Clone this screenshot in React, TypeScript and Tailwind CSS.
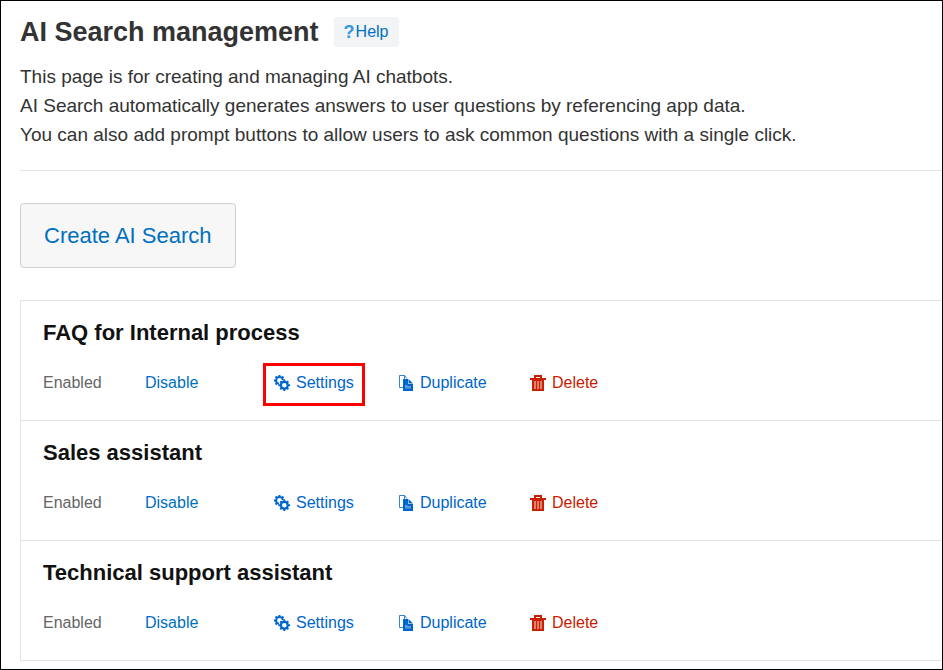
import React from "react";

const assistants = [
  { name: "FAQ for Internal process", highlighted: true },
  { name: "Sales assistant", highlighted: false },
  { name: "Technical support assistant", highlighted: false },
];

const teeth = [0, 45, 90, 135, 180, 225, 270, 315];

function Gear({ cx, cy, r, hole }: { cx: number; cy: number; r: number; hole: number }) {
  return (
    <g>
      <circle cx={cx} cy={cy} r={(r + hole) / 2} fill="none" stroke="currentColor" strokeWidth={r - hole} />
      {teeth.map((angle) => (
        <rect
          key={angle}
          x={cx - 1}
          y={cy - r - 1.2}
          width="2"
          height="2"
          fill="currentColor"
          transform={`rotate(${angle} ${cx} ${cy})`}
        />
      ))}
    </g>
  );
}

function GearsIcon() {
  return (
    <svg viewBox="0 0 16 16" className="size-4 shrink-0" aria-hidden="true">
      <Gear cx={5.5} cy={5.5} r={4.4} hole={2.4} />
      <circle cx="10.3" cy="10.3" r="5.6" fill="white" />
      <Gear cx={10.3} cy={10.3} r={4.5} hole={2.3} />
    </svg>
  );
}

function DuplicateIcon() {
  return (
    <svg viewBox="0 0 16 16" className="size-4 shrink-0" aria-hidden="true">
      <path d="M5 12.5H1.5V.5H6.5L9 3.5" fill="none" stroke="currentColor" strokeOpacity=".8" />
      <path d="M6.5.5V4" fill="none" stroke="currentColor" strokeOpacity=".8" />
      <path d="M5 4H10V9H15V16H5Z" fill="currentColor" />
      <path d="M10.5 4L15 8.5H10.5Z" fill="currentColor" />
      <path d="M7 10H9L10 11H13V13.5H7Z" fill="white" fillOpacity=".35" />
    </svg>
  );
}

function TrashIcon() {
  return (
    <svg viewBox="0 0 16 16" className="size-4 shrink-0" aria-hidden="true">
      <path d="M5 3V1H11V3" fill="none" stroke="currentColor" strokeWidth="2" />
      <path d="M0 3H16V5H0Z" fill="currentColor" />
      <path d="M2 5H14V16H2Z" fill="currentColor" />
      <path d="M5 6V14M8 6V14M11 6V14" stroke="white" strokeOpacity=".55" strokeWidth="1.6" />
    </svg>
  );
}

function AssistantRow({ name, highlighted }: { name: string; highlighted: boolean }) {
  return (
    <li className="border-b border-[#e3e3e3] px-[22px] pt-4 pb-[25px]">
      <h2 className="text-[22px] leading-8 font-bold text-[#111]">{name}</h2>
      <div className="mt-[22px] grid grid-cols-[102px_129px_124px_132px_auto] justify-start text-base leading-6">
        <span className="text-[#666]">Enabled</span>
        <button className="justify-self-start text-[#0070c0]">Disable</button>
        <button className="relative flex items-center gap-1.5 justify-self-start text-[#0066cc]">
          <GearsIcon />
          Settings
          {highlighted && (
            <span className="pointer-events-none absolute -inset-x-[11px] -top-2 -bottom-[11px] border-[3px] border-[#f00]" />
          )}
        </button>
        <button className="flex items-center gap-1.5 justify-self-start text-[#0066cc]">
          <DuplicateIcon />
          Duplicate
        </button>
        <button className="flex items-center gap-1.5 justify-self-start text-[#c82000]">
          <TrashIcon />
          Delete
        </button>
      </div>
    </li>
  );
}

export default function App() {
  return (
    <main className="min-h-screen border border-black bg-white pt-4 pb-2 pl-[19px] font-['Liberation_Sans',Arial,sans-serif] text-[#333]">
      <header className="flex items-center gap-[15px]">
        <h1 className="text-[27px] leading-[30px] font-bold">AI Search management</h1>
        <a href="#help" className="flex h-[30px] items-center rounded bg-[#f1f3f5] px-2.5 text-base text-[#0070c0]">
          <span className="mr-px text-lg font-bold text-[#3498db]">?</span>Help
        </a>
      </header>
      <p className="mt-[15px] text-[19px] leading-[29px]">
        This page is for creating and managing AI chatbots.
        <br />
        AI Search automatically generates answers to user questions by referencing app data.
        <br />
        You can also add prompt buttons to allow users to ask common questions with a single click.
      </p>
      <hr className="mt-[21px] border-[#e3e3e3]" />
      <button className="mt-8 rounded border border-[#d0d0d0] bg-[#f7f7f7] px-[23px] py-4 text-[22px] leading-[31px] text-[#0070c0]">
        Create AI Search
      </button>
      <ul className="mt-8 border-t border-l border-[#e3e3e3]">
        {assistants.map((assistant) => (
          <AssistantRow key={assistant.name} {...assistant} />
        ))}
      </ul>
    </main>
  );
}
